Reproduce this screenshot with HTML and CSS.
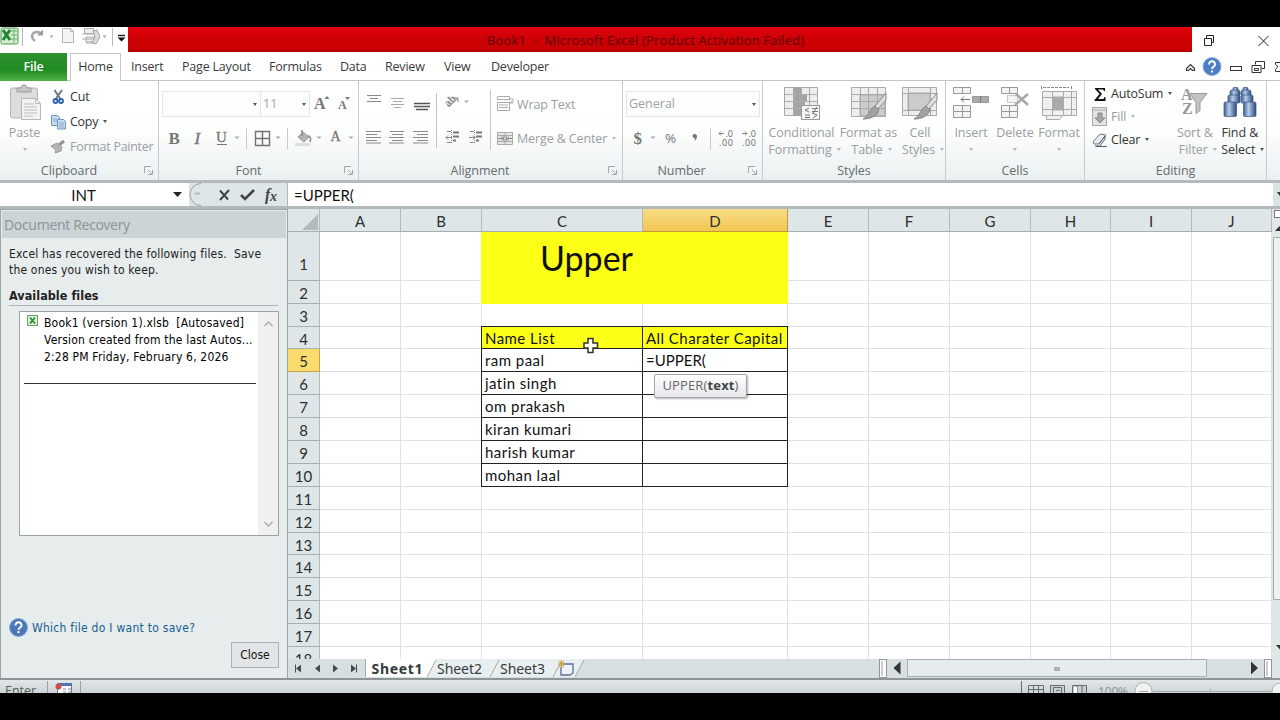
FILE: index.html
```html
<!DOCTYPE html>
<html lang="en">
<head>
<meta charset="utf-8">
<title>Book1 - Microsoft Excel</title>
<link rel="stylesheet" href="styles.css">
</head>
<body>
<div class="app">
  <header class="titlebar">
    <div class="qat">
      <svg width="128" height="25" viewBox="0 27 128 25">
        <rect x="1" y="28" width="17" height="16" rx="1.5" fill="#d5ecd2" stroke="#489a4c"/>
        <path d="M11 31h6M11 35h6M11 39h6M14 29v14" stroke="#6cb56d"/>
        <path d="M3 30l7 10M10 30l-7 10" stroke="#238530" stroke-width="3"/>
        <path d="M22.500 28v18M112.500 28v18" stroke="#b5b9bb"/>
        <path d="M35 41c-5-4-3-9 2-9 3 0 4 1 4 3" fill="none" stroke="#a6aaad" stroke-width="2.500"/>
        <path d="M37 35.500h6v-6z" fill="#989c9f"/>
        <path d="M49.500 35.500h4l-2 2.500zM102.500 35.500h4l-2 2.500z" fill="#a3a6a8"/>
        <path d="M62.500 28.500h8l3 3v11h-11z" fill="#f3f4f5" stroke="#b1b5b8"/>
        <path d="M70.500 28.500v3h3" fill="none" stroke="#b1b5b8"/>
        <path d="M84.500 28.500h9v5h-9zM86 37h8v5h-8z" fill="#eee" stroke="#a7abae"/>
        <path d="M82 34h13M82 39h11M86 43h10" stroke="#a7abae"/>
        <path d="M93 31l4-1 3 7-4 7-4-1 3-6z" fill="#dadcde" stroke="#a0a4a7"/>
        <path d="M118 35.500h7" stroke="#222" stroke-width="1.500"/><path d="M117.500 37.500h8l-4 4z" fill="#111"/>
      </svg>
    </div>
    <div class="caption"><span>Book1&nbsp; -&nbsp; Microsoft Excel (Product Activation Failed)</span></div>
    <svg class="winbtns" width="88" height="25" viewBox="1192 27 88 25" fill="none" stroke="#222">
      <path d="M1204.500 38.500h7v7h-7zM1206.500 38v-2.500h7v7h-2"/><path d="M1258.500 36l10 10M1268.500 36l-10 10"/>
    </svg>
  </header>

  <nav class="tabs">
    <span class="tab file">File</span>
    <span class="tab home">Home</span>
    <span class="tab t-ins">Insert</span>
    <span class="tab t-pl">Page Layout</span>
    <span class="tab t-fo">Formulas</span>
    <span class="tab t-da">Data</span>
    <span class="tab t-re">Review</span>
    <span class="tab t-vi">View</span>
    <span class="tab t-de">Developer</span>
    <svg class="tabtools" width="100" height="28" viewBox="1180 52 100 28" fill="none" stroke="#333">
      <path d="M1186.500 70.500v-2l4-4 4 4v2h-2l-2-2-2 2z" stroke-width="1.200"/>
      <circle cx="1212" cy="66.500" r="9" fill="#4b7fc5" stroke="#8aaedb"/>
      <path d="M1209 64.500c0-4.500 6.500-4 6 0 0 2-3 2.500-3 4.500M1212 70.500v2" stroke="#fff" stroke-width="2"/>
      <rect x="1230.500" y="66.500" width="11" height="4"/>
      <path d="M1255.500 61.500h9v7h-3M1255.500 61.500v3" /><path d="M1252 65.500h9v7h-9zM1254.500 68.500h4v2h-4z"/>
      <path d="M1281 62.500h-5.500v2l2.500 2-2.500 3v2h5.500"/>
    </svg>
  </nav>

  <section class="ribbon">
    <div class="group g-clip">
      <div class="body">
        <div class="big paste off">
          <svg width="36" height="41" viewBox="7 82 36 41">
            <rect x="10.500" y="88" width="27" height="30" rx="2" fill="#dcddde" stroke="#b3b5b7"/>
            <path d="M17 92v-4h4c0-4 6-4 6 0h4v4z" fill="#c4c6c8" stroke="#999b9d"/>
            <path d="M21.500 98.500h14l5 5v16h-19z" fill="#f2f2f3" stroke="#b4b6b8"/>
            <path d="M24 104h10M24 107h13M24 110h13M24 113h13M24 116h9M35.500 98.500v5h5" stroke="#babcbe" fill="none"/>
          </svg>
          <span>Paste</span><i class="dd"></i>
        </div>
        <div class="stack">
          <div class="line"><svg width="18" height="18" viewBox="50 88 18 18" fill="none">
            <path d="M54.500 90l6.500 10M62 90l-7 10" stroke="#6a7885" stroke-width="2"/><circle cx="55.500" cy="101" r="2" stroke="#2e62a8" stroke-width="1.800"/><circle cx="61" cy="101" r="2" stroke="#2e62a8" stroke-width="1.800"/></svg><span>Cut</span></div>
          <div class="line"><svg width="18" height="18" viewBox="50 113 18 18" stroke="#7191ba" fill="#cadcf0">
            <path d="M51.500 115.500h6l2 2v8h-8z"/><path d="M57.500 119.500h6l2 2v7.500h-8z"/><path d="M53 119h4M53 121h4M59 123h5M59 125h5M59 127h5" stroke="#8eabd0"/></svg><span class="cp">Copy</span><i class="dd"></i></div>
          <div class="line off"><svg width="18" height="18" viewBox="50 138 18 18">
            <path d="M64 141l-5 4" stroke="#8f9294" stroke-width="3"/><path d="M57 143l5 4-1 4-6 2 1-3-5-4z" fill="#b3b5b7" stroke="#999b9d"/></svg><span class="fp">Format Painter</span></div>
        </div>
      </div>
      <div class="cap"><span>Clipboard</span><svg class="dl" width="9" height="9"><path d="M.5 7V.5H7M4 4l4 4M8.500 4v4.500H4" fill="none" stroke="#a0a4a6"/></svg></div>
    </div>

    <div class="group g-font">
      <div class="body col">
        <div class="combos">
          <div class="combo cname"><i class="dd"></i></div>
          <div class="combo csize"><span>11</span><i class="dd"></i></div>
          <svg width="46" height="25" viewBox="312 91 46 25" class="serif" fill="#777" font-weight="bold">
            <text x="314" y="109" font-size="16">A</text><path d="M324.500 99h5l-2.500-3z"/>
            <text x="338" y="109" font-size="12">A</text><path d="M345 97h5l-2.500 3z"/>
          </svg>
        </div>
        <svg width="199" height="28" viewBox="159 124 199 28" class="serif" fill="#777">
          <text x="168.500" y="143.500" font-size="17" font-weight="bold">B</text>
          <text x="194.500" y="143.500" font-size="17" font-style="italic" stroke="#777" stroke-width=".4">I</text>
          <text x="216" y="142" font-size="15" stroke="#777" stroke-width=".3">U</text>
          <path d="M217 144h10v1h-10z"/>
          <path d="M234.500 136.500h5l-2.500 2.500zM275.500 136.500h5l-2.500 2.500zM316.500 136.500h5l-2.500 2.500zM348.500 136.500h5l-2.500 2.500z" fill="#aaa"/>
          <path d="M246.500 128v21M287.500 128v21" stroke="#c8cacc"/>
          <path d="M255.500 131.500h14v14h-14zM262.500 131.500v14M255.500 138.500h14" fill="none" stroke="#707274" stroke-width="1.400"/>
          <path d="M298 137l5-5 6 5-5 5z" fill="#b3b4b5" stroke="#999"/><path d="M302 136v-6M308 136c3 0 3 3 2 6" stroke="#888" stroke-width="1.500" fill="none"/><path d="M295 143h15v3h-15z" fill="#ddd"/>
          <text x="330.500" y="141" font-size="14" stroke="#777" stroke-width=".3">A</text>
        </svg>
      </div>
      <div class="cap"><span>Font</span><svg class="dl" width="9" height="9"><path d="M.5 7V.5H7M4 4l4 4M8.500 4v4.500H4" fill="none" stroke="#a0a4a6"/></svg></div>
    </div>

    <div class="group g-align">
      <div class="body">
        <svg width="137" height="72" viewBox="359 82 137 72" fill="none" stroke="#888">
          <path d="M367 96.500h14M370 99.500h8M367 102.500h14"/>
          <path d="M391 99.500h13M393 102.500h9M391 105.500h13M394 108.500h7" stroke="#aaa"/>
          <path d="M414 104.500h16M414 107.500h16M416 110.500h12" stroke="#555" stroke-width="1.400"/>
          <path d="M366 132.500h15M366 135.500h11M366 138.500h15M366 141.500h11M366 144h15"/>
          <path d="M390 132.500h14M392 135.500h11M389 138.500h15M392 141.500h11M389 144h15"/>
          <path d="M413 132.500h15M417 135.500h11M413 138.500h15M417 141.500h11M413 144h15"/>
          <path d="M436.500 94v55M490.500 91v60" stroke="#c2c4c6"/>
          <text x="444" y="106" class="ab" transform="rotate(-45 449 102)">ab</text>
          <path d="M449 108l9-9m0 4v-4h-4"/>
          <path d="M464 101.500h5l-2.500 2.500z" fill="#aaa" stroke="none"/>
          <path d="M452 138.500h-6l2-2m-2 2l2 2M469 138.500h6l-2-2m2 2l-2 2" />
          <path d="M451.500 131v13M474.500 131v13" stroke-dasharray="1 1"/>
          <path d="M453 133.500h6M453 137.500h6M453 141.500h3M476 133.500h6M476 137.500h6M476 141.500h3" stroke="#777" stroke-width="2"/><path d="M447 132.500h4M447 143.500h4M470 132.500h4M470 143.500h4"/>
        </svg>
        <div class="stack al">
          <div class="line off"><svg width="18" height="18" viewBox="496 95 18 18" fill="none" stroke="#aaa"><path d="M497.500 96.500h12v3h-12zM497.500 102.500h12v8h-12zM499 105h9M499 107.500h9M509 99h4v4h-3m0 0l2-2"/></svg><span class="wt">Wrap Text</span></div>
          <div class="line off"><svg width="18" height="18" viewBox="496 129 18 18" fill="#e6e6e7" stroke="#aaa"><path d="M497.500 132.500h15v12h-15zM497.500 135.500h15M497.500 141.500h15M505 132.500v3M505 141.500v3"/><path d="M498 138.500h4m6 0h4m-10-2v4m6-4v4M503.500 140h3v-3h-3z" stroke="#888"/></svg><span class="mc">Merge &amp; Center</span><i class="dd"></i></div>
        </div>
      </div>
      <div class="cap"><span>Alignment</span><svg class="dl" width="9" height="9"><path d="M.5 7V.5H7M4 4l4 4M8.500 4v4.500H4" fill="none" stroke="#a0a4a6"/></svg></div>
    </div>

    <div class="group g-num">
      <div class="body col">
        <div class="combos"><div class="combo cgen"><span>General</span><i class="dd"></i></div></div>
        <svg width="139" height="28" viewBox="623 124 139 28" fill="#777">
          <text x="633.500" y="143.500" font-size="17" font-weight="bold" class="serif">$</text>
          <path d="M650.500 136.500h5l-2.500 2.500z" fill="#aaa"/>
          <text x="665" y="143" font-size="13.500" class="ui">%</text>
          <path d="M694.500 134a2.300 2.300 0 0 1 2.500 2c0 2-1 4-3 5 1-1.500 1-2 .5-3a2 2 0 0 1 0-4z"/>
          <path d="M710.500 128v22" stroke="#c8cacc"/>
          <g font-size="9" class="ui" fill="#666"><text x="725.500" y="136.500">.0</text><text x="719" y="146" textLength="14">.00</text><text x="748.500" y="136.500">.0</text><text x="742" y="146" textLength="14">.00</text></g>
          <path d="M719 133.500h5m-5 0l2-2m-2 2l2 2M742 133.500h5m0 0l-2-2m2 2l-2 2" stroke="#888" fill="none"/>
        </svg>
      </div>
      <div class="cap"><span>Number</span><svg class="dl" width="9" height="9"><path d="M.5 7V.5H7M4 4l4 4M8.500 4v4.500H4" fill="none" stroke="#a0a4a6"/></svg></div>
    </div>

    <div class="group g-styles">
      <div class="body">
        <div class="big off w1"><svg width="40" height="41" viewBox="782 82 40 41" fill="#eee" stroke="#aaa">
          <path d="M784.500 87.500h33v28h-33z"/><path d="M793 87h8v29h-8zM801 94h6v7h-6zM801 101h4v7h-4z" fill="#a2a4a6" stroke="none"/><path d="M784 94.500h33M784 101.500h33M784 108.500h33M793.500 87v28M801.500 87v28M809.500 87v28"/><rect x="801.500" y="105.500" width="18" height="14" fill="#f4f4f4" stroke="#999"/><path d="M809 108l-4 2 4 2M812 108.500h6M812 111.500h6M817 107l-4 6M805 115h5M805 117.500h5M812 113l5 2-4 3" fill="none" stroke="#777"/></svg><span>Conditional</span><span>Formatting<i class="dd"></i></span></div>
        <div class="big off w2"><svg width="40" height="41" viewBox="848 82 40 41" fill="#eee" stroke="#aaa">
          <path d="M850.500 87.500h34v29h-34z"/><path d="M859 95h25v21h-25z" fill="#ccc"/><path d="M850 94.500h34M850 101.500h34M850 108.500h34M859.500 87v29M867.500 87v29M876.500 87v29"/><path d="M885 93l-11 13 3 3 8-9z" fill="#ddd" stroke="#888"/><path d="M874 106l4 4c-2 6-8 9-16 9 6-3 7-11 12-13z" fill="#a0a2a4" stroke="#888"/></svg><span>Format as</span><span>Table<i class="dd"></i></span></div>
        <div class="big off w3"><svg width="40" height="41" viewBox="900 82 40 41" fill="#eee" stroke="#aaa">
          <path d="M902.500 87.500h34v28h-34z"/><path d="M908 93h22v17h-22z" fill="#ccc"/><path d="M902 93.500h34M902 110.500h34M908.500 87v28M930.500 87v28"/><path d="M937 93l-11 13 3 3 8-9z" fill="#ddd" stroke="#888"/><path d="M926 106l4 4c-2 6-8 9-16 9 6-3 7-11 12-13z" fill="#a0a2a4" stroke="#888"/></svg><span>Cell</span><span>Styles<i class="dd"></i></span></div>
      </div>
      <div class="cap"><span>Styles</span></div>
    </div>

    <div class="group g-cells">
      <div class="body">
        <div class="big off w4"><svg width="40" height="41" viewBox="950 82 40 41" fill="#f3f3f3" stroke="#999">
          <path d="M952.500 87.500h17v6h-17zM961.500 87v6M952.500 105.500h17v12h-17zM961.500 105v12M952 111.500h17"/><path d="M971.500 96.500h16v6h-16z" fill="#aaa"/><path d="M979.500 96v6M960 99.500h9m-9 0l3-3m-3 3l3 3" fill="none" stroke="#777"/></svg><span>Insert</span><i class="dd"></i></div>
        <div class="big off w5"><svg width="40" height="41" viewBox="995 82 40 41" fill="#f3f3f3" stroke="#999">
          <path d="M1001.500 87.500h16v6h-16zM1009.500 87v6M1001.500 105.500h16v12h-16zM1009.500 105v12M1001 111.500h16"/><path d="M1007.500 95.500h10v7h-10z" stroke-dasharray="1 1"/><path d="M1016 94l12 11M1028 94l-13 11" stroke="#a5a7a9" stroke-width="2.500"/></svg><span>Delete</span><i class="dd"></i></div>
        <div class="big off w6"><svg width="40" height="41" viewBox="1039 82 40 41" fill="#f0f0f0" stroke="#aaa">
          <path d="M1042.500 91.500h34v24h-14l-3 4h-13v-4h-4z"/><path d="M1053 97h10v13h-10z" fill="#aaa"/><path d="M1042 97.500h34M1042 109.500h34M1052.500 91v24M1063.500 91v24M1071.500 91v24M1046 115.500h16"/><path d="M1041.500 86v4M1071.500 86v4M1043 87.500h26" stroke="#888" stroke-dasharray="3 1"/></svg><span>Format</span><i class="dd"></i></div>
      </div>
      <div class="cap"><span>Cells</span></div>
    </div>

    <div class="group g-edit">
      <div class="body">
        <div class="stack ed">
          <div class="line"><svg width="18" height="18" viewBox="1090 85 18 18"><path d="M1095 88h10v3h-1l-1-1.500h-5l4 4.500-4 5h5.500l1-2h1v4h-11v-1l5-6-4.500-5z" fill="#111"/></svg><span>AutoSum</span><i class="dd"></i></div>
          <div class="line off"><svg width="18" height="20" viewBox="1090 107 18 20"><rect x="1092.500" y="107.500" width="14" height="18" fill="#e2e3e4" stroke="#aaa"/><path d="M1093 110h13" stroke="#aaa"/><path d="M1098 113h4v5h3l-5 5-5-5h3z" fill="#a5a7a9" stroke="#888"/></svg><span>Fill</span><i class="dd"></i></div>
          <div class="line"><svg width="18" height="18" viewBox="1090 130 18 18"><path d="M1093 141l7-8 6 1-7 9h-5z" fill="#e9edf2" stroke="#6d7680"/><path d="M1099 143l6-8v3l-5 7h-5M1096 145.500h11" fill="none" stroke="#555d66"/></svg><span>Clear</span><i class="dd"></i></div>
        </div>
        <div class="big off w7"><svg width="30" height="41" viewBox="1181 82 30 41"><g class="serif" fill="#999" font-weight="bold"><text x="1182" y="100" font-size="16">A</text><text x="1183" y="114" font-size="16">Z</text></g><path d="M1191 93.500h17l-7 9v8l-4 3v-11z" fill="#c2c4c6" stroke="#999"/></svg><span>Sort &amp;</span><span>Filter<i class="dd"></i></span></div>
        <div class="big w8"><svg width="36" height="41" viewBox="1223 82 36 41">
          <defs><linearGradient id="bin"><stop offset="0" stop-color="#3d5f93"/><stop offset=".4" stop-color="#b5cdec"/><stop offset="1" stop-color="#2a4a7a"/></linearGradient></defs>
          <g fill="url(#bin)" stroke="#3b5378" stroke-width=".7"><rect x="1234" y="87.500" width="5" height="4" rx="1"/><rect x="1244" y="87.500" width="5" height="4" rx="1"/><rect x="1231" y="90" width="10" height="6" rx="2"/><rect x="1242" y="90" width="10" height="6" rx="2"/><rect x="1229" y="95" width="12" height="8" rx="1.500"/><rect x="1242" y="95" width="12" height="8" rx="1.500"/><rect x="1225" y="102" width="12.500" height="14.500" rx="1.500"/><rect x="1244.500" y="102" width="12.500" height="14.500" rx="1.500"/></g></svg><span>Find &amp;</span><span>Select<i class="dd"></i></span></div>
      </div>
      <div class="cap"><span>Editing</span></div>
    </div>
  </section>

  <div class="formula">
    <div class="namebox"><span>INT</span><svg width="9" height="6"><path d="M0 0h9l-4.500 5z" fill="#222"/></svg></div>
    <svg class="fxtools" width="98" height="23" viewBox="189 183 98 23">
      <path d="M288 183.500h-88a11 11 0 0 0 0 22h88z" fill="#dfe6e7"/><path d="M201 183.500a11 11 0 0 0 0 22" fill="none" stroke="#9aa1a3"/>
      <path d="M195 193.500h5" stroke="#b4babc" stroke-width="2"/>
      <path d="M220 190.500l8 9M229 190l-9 10" stroke="#444" stroke-width="2"/><path d="M241 195l4 4 9-9" fill="none" stroke="#444" stroke-width="2.600"/>
      <text x="265" y="200" font-size="16" font-weight="bold" font-style="italic" class="serif" fill="#444">f</text><text x="270" y="201" font-size="14" font-weight="bold" font-style="italic" class="serif" fill="#444">x</text>
    </svg>
    <div class="fx">=UPPER(</div>
    <div class="fxend"><svg width="8" height="23"><path d="M4 9h7l-3.500 5z" fill="#333"/></svg></div>
  </div>

  <main class="work">
    <aside class="pane">
      <h2>Document Recovery</h2>
      <p>Excel has recovered the following files.&nbsp; Save<br>the ones you wish to keep.</p>
      <h3>Available files</h3>
      <div class="files">
        <div class="entry">
          <svg width="12" height="12"><rect x=".5" y=".5" width="10" height="10" fill="#def0dc" stroke="#63a967"/><path d="M3 2.500l5 6M8 2.500l-5 6" stroke="#2d8a38" stroke-width="1.800"/></svg>
          <div class="desc"><div class="d1">Book1 (version 1).xlsb&nbsp; [Autosaved]</div><div class="d2">Version created from the last Autos...</div><div class="d3">2:28 PM Friday, February 6, 2026</div></div>
        </div>
        <div class="pscroll"><svg width="9" height="6"><path d="M.5 5l4-4 4 4" fill="none" stroke="#aaa" stroke-width="1.400"/></svg><svg width="9" height="6"><path d="M.5 1l4 4 4-4" fill="none" stroke="#aaa" stroke-width="1.400"/></svg></div>
      </div>
      <a class="help"><svg width="19" height="19"><circle cx="9.500" cy="9.500" r="9" fill="#4a78ba" stroke="#89a8d2"/><path d="M6.500 7.500c0-4.500 6.500-4 6 0 0 2-3 2-3 4.300M9.500 13v2" fill="none" stroke="#fff" stroke-width="2"/></svg><span>Which file do I want to save?</span></a>
      <button class="close">Close</button>
    </aside>

    <div class="sheetwrap">
      <div class="sheet" id="sheet"></div>
      <div class="sheetbar">
        <svg width="302" height="19" viewBox="288 659 302 19">
          <g fill="#444b4d"><path d="M301 664.500v8l-5-4zM320 664.500v8l-5-4zM333 664.500v8l5-4zM351 664.500v8l5-4z"/><path d="M295 664.500h1v8h-1zM356 664.500h1v8h-1z"/></g>
          <path d="M365 659h71l-8 18h-63z" fill="#fff"/>
          <path d="M436 659h63l-9 18h-62z" fill="#e9eff0"/><path d="M499 659h63l-9 18h-63z" fill="#e9eff0"/><path d="M562 659h22l-9 18h-22z" fill="#e9eff0"/>
          <path d="M365.500 659v18M436 660l-9 17M499 660l-9 17M562 660l-9 17M584 660l-9 17" fill="none" stroke="#a3abae"/>
          <path d="M563 664h10v9l-3 2h-9v-8" fill="#eef3fa" stroke="#5c6f97" stroke-width="1.300"/><path d="M561.500 660v8M558 664h7.500M559 661l5 6M564 661l-5 6" stroke="#d29a28"/>
          <g class="tab-t" fill="#333b3d"><text x="371.500" y="674" font-weight="bold" textLength="51">Sheet1</text><text x="437" y="674" textLength="45">Sheet2</text><text x="500" y="674" textLength="45">Sheet3</text></g>
        </svg>
        <svg class="hs" width="393" height="19" viewBox="879 659 393 19">
          <rect x="879.500" y="659.500" width="7" height="18" fill="#fff" stroke="#8f9799"/><path d="M882 661v15" stroke="#999"/>
          <path d="M900.500 661.500v13l-7-6.500z" fill="#333"/><path d="M1251 661.500v13l7-6.500z" fill="#333"/>
          <rect x="907.500" y="659.500" width="299" height="17" fill="#e6eced" stroke="#a6aeb0"/><path d="M1054 667h6v4h-6z" fill="#aab1b3"/>
          <rect x="1264.500" y="659.500" width="7" height="18" fill="#fff" stroke="#8f9799"/><path d="M1267 661v15" stroke="#999"/>
        </svg>
      </div>
      <div class="tip">UPPER(<b>text</b>)</div>
      <svg class="cursor" width="16" height="17"><path d="M5 1.500h5v4.500h4.500v5H10v4.500H5V11H1V6h4z" fill="#fffff0" stroke="#333" stroke-width="1.500"/></svg>
    </div>
    <div class="vscroll"><svg width="8" height="470" viewBox="1272 209 8 470">
      <rect x="1274.500" y="210.500" width="8" height="7" fill="#fff" stroke="#777"/><path d="M1273 218h7v19h-7z" fill="#e2e8e9"/><path d="M1275 231h9l-4.500-5z" fill="#333"/>
      <path d="M1273.500 237.500h8v362h-8z" fill="#edf1f2" stroke="#a2aaac"/><path d="M1276 645h9l-4.500 5z" fill="#333"/></svg></div>
  </main>

  <footer class="status">
    <span class="mode">Enter</span>
    <svg width="40" height="13" viewBox="45 680 40 13"><path d="M47.500 681v12M80.500 681v12" stroke="#9aa1a3"/><path d="M57.500 683.500h14v12h-14z" fill="#fff" stroke="#607ba8"/><path d="M58 683h14v3h-14z" fill="#4e72b4"/><path d="M63 689h3M68 689h3M63 692h3M68 692h3" stroke="#888"/><circle cx="58.500" cy="686.500" r="3" fill="#d04c3c"/></svg>
    <svg class="views" width="260" height="13" viewBox="1020 680 260 13" fill="none" stroke="#666d70"><path d="M1021.500 681v12"/><path d="M1028.500 685.500h15v10h-15zM1028 689.500h15M1033.500 686v8M1038.500 686v8"/><path d="M1050.500 685.500h14v10h-14z" fill="#c9cfd1"/><path d="M1053.500 687.500h8v8h-8zM1056 690.500h4"/><path d="M1072.500 685.500h14v10h-14zM1077 686v8M1082 686v8" fill="#c9cfd1"/><path d="M1074 687h3v7h-3z" fill="#fff" stroke="none"/>
      <text x="1098" y="696" font-size="12" class="ui" fill="#8b9194" stroke="none" textLength="30">100%</text>
      <path d="M1152 691.500h122M1210.500 689v4" stroke="#a8afb1"/><circle cx="1143.500" cy="691" r="8.500" fill="#f0f2f2" stroke="#adb3b5"/><path d="M1139 691.500h9" stroke="#aaa"/><circle cx="1280" cy="691" r="8" fill="#f0f2f2" stroke="#adb3b5"/></svg>
  </footer>
</div>
<script src="sheet.js"></script>
</body>
</html>
```
FILE: styles.css
```css
* { box-sizing: border-box; }
body { margin: 0; background: #000; overflow: hidden; font-family: "Open Sans", "Noto Sans", sans-serif; font-size: 12.5px; color: #333; }
svg { display: block; flex: none; overflow: hidden; }
.app { width: 1280px; height: 720px; padding-top: 27px; display: flex; flex-direction: column; overflow: hidden; }
.serif { font-family: "Liberation Serif", serif; }
.ui { font-family: "Open Sans", sans-serif; }
.ab { font: bold 11px "Liberation Serif", serif; fill: #888; stroke: none; }

.titlebar { height: 25px; display: flex; background: #fff; flex: none; }
.qat { width: 128px; }
.caption { flex: 1; background: linear-gradient(#e2000f, #d00005 40%, #c80000 90%, #a80000); color: #5a0006; display: flex; align-items: center; padding-left: 359px; }
.caption span { font-size: 13px; white-space: nowrap; letter-spacing: .16px; font-weight: 500; }

.tabs { height: 29px; display: flex; flex: none; background: #fff; border-bottom: 1px solid #c3c6c8; color: #3b3b3b; }
.tab { height: 28px; line-height: 30px; white-space: nowrap; letter-spacing: -.2px; }
.file { width: 67px; margin-top: 1px; text-align: center; line-height: 28px; color: #fff; font-weight: 600; background: linear-gradient(#2f9130, #208a24 60%, #4fb345); }
.home { width: 51px; margin: 1px 0 -1px 3px; height: 28px; line-height: 26px; text-align: center; background: #fff; border: 1px solid #c3c6c8; border-bottom: 0; }
.t-ins { width: 51px; margin-left: 10px; }
.t-pl { width: 87px; }
.t-fo { width: 71px; }
.t-da { width: 45px; }
.t-re { width: 59px; }
.t-vi { width: 47px; }
.tabtools { margin-left: auto; }

.ribbon { height: 99px; display: flex; flex: none; background: linear-gradient(#fff, #fdfefe 50%, #eaf0f0); }
.group { display: flex; flex-direction: column; border-right: 1px solid #c6cccd; }
.g-clip { width: 159px; }
.g-font { width: 200px; }
.g-align { width: 264px; }
.g-num { width: 140px; }
.g-styles { width: 183px; }
.g-cells { width: 139px; }
.g-edit { width: 182px; }
.body { height: 78px; display: flex; }
.body.col { flex-direction: column; }
.cap { height: 21px; display: flex; justify-content: center; align-items: center; color: #666b6e; padding-top: 1px; position: relative; letter-spacing: -.05px; }
.g-clip .cap { padding-right: 20px; }
.g-font .cap { padding-right: 20px; }
.g-align .cap { padding-right: 21px; }
.g-num .cap { padding-right: 22px; }
.dl { position: absolute; right: 5px; top: 7px; }
.off { color: #9b9d9f; }
.dd { display: inline-block; flex: none; width: 0; height: 0; border: 2.5px solid transparent; border-top: 3px solid #555; border-bottom: 0; }
.off .dd { border-top-color: #b5b7b9; }

.stack { display: flex; flex-direction: column; padding-top: 3px; margin-left: 2px; }
.line { height: 25px; display: flex; align-items: center; white-space: nowrap; letter-spacing: -.2px; }
.line span { margin-left: 2px; }
.line .dd { margin-left: 5px; }
.line .cp { letter-spacing: -.3px; }
.line .fp { letter-spacing: -.27px; }
.big { display: flex; flex-direction: column; align-items: center; white-space: nowrap; line-height: 16.5px; letter-spacing: -.08px; padding-top: 1px; }
.big svg { margin-bottom: 2px; }
.big > .dd { margin-top: 6px; }
.big span .dd { margin: 0 -6px 3px 5px; }
.paste { width: 49px; }
.paste + .stack { margin-left: 1px; }
.combos { display: flex; margin-top: 10px; height: 26px; flex: none; padding-left: 3px; }
.combo { height: 26px; border: 1px solid #e3e5e6; background: #fcfdfd; display: flex; align-items: center; justify-content: space-between; color: #a0a2a4; padding: 0 3px 2px 2px; }
.combo .dd, .off .combo .dd { margin-top: 2px; }
.cname { width: 99px; justify-content: flex-end; }
.csize { width: 49px; border-left: 0; margin-right: 2px; }
.cgen { width: 134px; }
.col > svg { margin-top: 7px; }
.al { margin-left: 0; padding-top: 6px; }
.al .line { height: 34px; letter-spacing: -.12px; }
.al .line span { margin-left: 3px; }
.ed { width: 87px; margin-left: 5px; padding-top: 1px; }
.ed .line { height: 23px; }
.ed .line span { margin-left: 3px; }
.w1 { width: 67px; margin-left: 5px; }
.w2 { width: 67px; }
.w3 { width: 36px; }
.w4 { width: 46px; margin-left: 2px; }
.w5 { width: 42px; }
.w6 { width: 46px; }
.w7 { width: 38px; }
.w8 { width: 53px; }

.formula { height: 29px; flex: none; display: flex; align-items: stretch; border-top: 3px solid #b4babc; border-bottom: 3px solid #b2b9bb; background: #dce3e4; font-family: Lato, sans-serif; color: #111; }
.namebox { width: 189px; background: #fff; display: flex; align-items: center; font-size: 15px; }
.namebox span { width: 167px; text-align: center; }
.namebox svg { margin-left: 6px; }
.fxtools { width: 98px; }
.fx { flex: 1; background: #fff; border-left: 1px solid #b0b6b8; padding-left: 6px; font-size: 15px; line-height: 24px; }
.fxend { width: 7px; }

.work { height: 469px; display: flex; flex: none; background: #dfe6e7; }
.pane { width: 288px; border: solid #9da4a6; border-width: 1px 1px 0; background: #e7eced; display: flex; flex-direction: column; font-family: "DejaVu Sans Condensed", "DejaVu Sans", sans-serif; font-size: 12px; color: #222; font-stretch: condensed; }
.pane h2 { margin: 1px 1px 0; padding-left: 2px; font: 14px/27px "Noto Sans", sans-serif; color: #8f9799; background: #cdd4d7; letter-spacing: -.35px; }
.pane p { margin: 9px 0 0 8px; line-height: 15.5px; white-space: nowrap; letter-spacing: .18px; }
.pane h3 { margin: 9px 9px 0 8px; height: 19px; line-height: 18px; font-size: 12.5px; letter-spacing: .05px; border-bottom: 1px solid #aeb5b7; }
.files { margin: 5px 8px 0 18px; height: 225px; background: #fff; border: 1px solid #9ca3a5; display: flex; justify-content: space-between; }
.entry { width: 232px; margin-left: 4px; height: 72px; border-bottom: 1px solid #333; display: flex; padding: 3px 0 0 3px; color: #000; }
.desc { margin-left: 5px; line-height: 17px; white-space: nowrap; letter-spacing: .18px; }
.d1, .d2 { letter-spacing: .2px; }
.pscroll { width: 20px; background: #f0f0f0; display: flex; flex-direction: column; justify-content: space-between; align-items: center; padding: 9px 0 8px; }
.help { margin: 82px 0 0 8px; display: flex; align-items: center; color: #176090; height: 19px; white-space: nowrap; letter-spacing: .27px; }
.help span { margin-left: 4px; }
.close { margin: 5px 8px 0 auto; width: 48px; height: 26px; border: 1px solid #adb1b3; background: #e3e4e5; font: inherit; color: #111; padding: 0; letter-spacing: 0; }

.sheetwrap { width: 984px; position: relative; display: flex; flex-direction: column; }
.sheet { height: 450px; overflow: hidden; display: grid; font-family: Lato, sans-serif; font-size: 15px; color: #111;
  font-variant-ligatures: none;
  grid-template-columns: 32px 81px 81px 161px 145px 81px 81px 81px 80px 81px 80px;
  grid-template-rows: 23px 49px 23px 23px 22px 23px 23px 23px 23px 23px 23px 23px 23px 22px 23px 23px 23px 23px 23px; }
.hd { background: #dfe6e7; border-right: 1px solid #b3babc; border-bottom: 1px solid #a9b0b2; text-align: center; line-height: 24px; color: #2b2f30; }
.row1 { padding-top: 20px; }
.hot-col { background: linear-gradient(#f8dc86, #f2c753); border-color: #c09a3a; }
.hot-row { background: #f9dc6c; border-color: #c8a645; }
.corner { padding: 0; display: flex; justify-content: flex-end; align-items: flex-end; }
.cell { background: #fff; border-right: 1px solid #dfe2e3; border-bottom: 1px solid #dfe2e3; padding-left: 3px; line-height: 23px; white-space: nowrap; overflow: hidden; }
.merged { grid-column: 4 / 6; grid-row: 2 / 4; background: #fcff16; margin-left: -1px; font-size: 34px; line-height: 52px; text-align: center; padding-right: 99px; color: #111; border: 0; }
.data { border-color: #222; margin-left: -1px; border-left: 1px solid #222; letter-spacing: .45px; }
.edit { letter-spacing: 0; }
.head { background: #fcff16; margin-top: -1px; border-top: 1px solid #222; }
.sheetbar { height: 19px; display: flex; justify-content: space-between; background: #d7dfe1; }
.tab-t { font-family: "Noto Sans", sans-serif; font-size: 14px; }
.tip { position: absolute; left: 366px; top: 165px; width: 93px; height: 24px; border: 1px solid #a5a7a9; border-radius: 2px; background: linear-gradient(#fff, #e4e6ea); box-shadow: 1px 1px 2px rgba(0,0,0,.3); font-size: 13px; line-height: 20px; text-align: center; color: #666; letter-spacing: .15px; }
.tip b { color: #444; }
.cursor { position: absolute; left: 295px; top: 128px; }
.vscroll { width: 8px; background: #dfe6e7; }

.status { height: 15px; flex: none; display: flex; overflow: hidden; border-top: 2px solid #8d9597; background: linear-gradient(#e2e7e8, #cdd4d6); color: #555c5e; }
.mode { width: 45px; padding-left: 5px; line-height: 22px; }
.views { margin-left: auto; }
```
FILE: sheet.js
```js
const names = ["ram paal", "jatin singh", "om prakash", "kiran kumari", "harish kumar", "mohan laal"];
const sheet = document.getElementById("sheet");

function put(cls, col, row, text) {
  const d = document.createElement("div");
  d.className = cls;
  if (col) { d.style.gridColumn = col; d.style.gridRow = row; }
  d.textContent = text || "";
  sheet.appendChild(d);
  return d;
}

put("hd corner", 1, 1).innerHTML = '<svg width="18" height="18"><path d="M17 1v16H1z" fill="#b4bbbd"/></svg>';
"ABCDEFGHIJ".split("").forEach((c, i) => put("hd" + (c === "D" ? " hot-col" : ""), i + 2, 1, c));

for (let r = 1; r <= 18; r++) {
  put("hd" + (r === 5 ? " hot-row" : "") + (r === 1 ? " row1" : ""), 1, r + 1, r);
  for (let c = 2; c <= 11; c++) {
    const inTable = r >= 4 && r <= 10 && (c === 4 || c === 5);
    let text = "";
    if (inTable && c === 4) text = r === 4 ? "Name List" : names[r - 5];
    if (c === 5 && r === 4) text = "All Charater Capital";
    if (c === 5 && r === 5) text = "=UPPER(";
    if (r <= 2 && (c === 4 || c === 5)) continue;
    put("cell" + (inTable ? " data" : "") + (inTable && r === 4 ? " head" : "") + (c === 5 && r === 5 ? " edit" : ""), c, r + 1, text);
  }
}
put("cell merged", 0, 0, "Upper");
```
